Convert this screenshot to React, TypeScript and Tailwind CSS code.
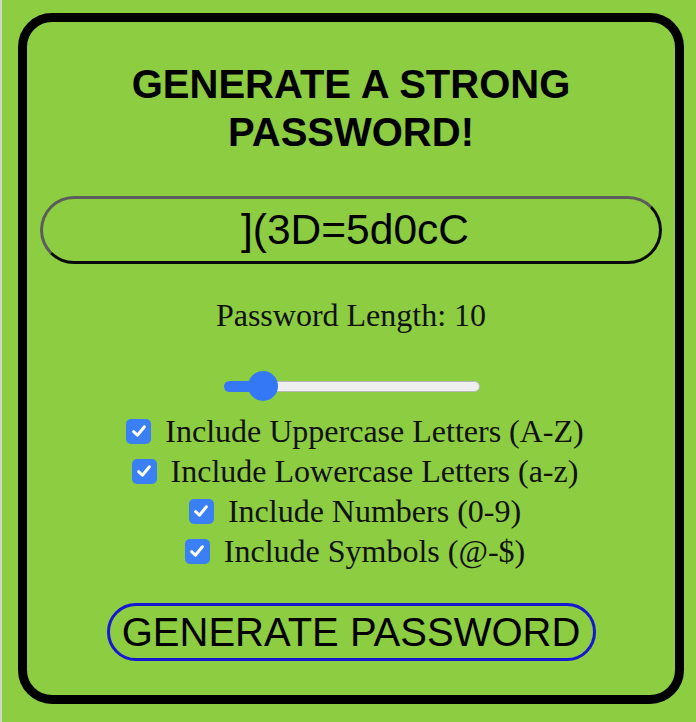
import React from "react";

const labels = [
  "Include Uppercase Letters (A-Z)",
  "Include Lowercase Letters (a-z)",
  "Include Numbers (0-9)",
  "Include Symbols (@-$)",
];

function Check() {
  return (
    <span className="ml-[8px] mr-[6px] flex h-[25px] w-[25px] shrink-0 items-center justify-center rounded-[5px] bg-[#3b7ff5]">
      <svg width="18" height="18" viewBox="0 0 16 16" fill="none">
        <path d="M3.2 8.6 L6.6 11.8 L12.8 4.2" stroke="white" strokeWidth="2.6" strokeLinecap="round" strokeLinejoin="round" />
      </svg>
    </span>
  );
}

export default function App() {
  return (
    <div className="h-[722px] w-[696px] bg-[#8ccd41] pl-[18px] pt-[13px] border-l-[2px] border-[#cfd6c8]">
      <div className="ml-[-2px] flex h-[691px] w-[666px] flex-col items-center rounded-[34px] border-[9px] border-black">
        <h1 className="mt-[38px] text-center text-[40px] font-bold leading-[48px] text-black [font-family:'Liberation_Sans',Arial,sans-serif]">
          GENERATE A STRONG
          <br />
          PASSWORD!
        </h1>
        <div className="mt-[40px] flex h-[68px] w-[622px] items-center justify-center rounded-full border-[3px] border-t-[#5c5c5c] border-l-[#5c5c5c] border-b-[#0a0a0a] border-r-[#0a0a0a] pl-[8px] text-[42.5px] text-black [font-family:'Liberation_Sans',Arial,sans-serif]">
          ](3D=5d0cC
        </div>
        <div className="mt-[33px] text-[32px] leading-[36px] text-[#111] [font-family:'Liberation_Serif','Times_New_Roman',serif]">
          Password Length: 10
        </div>
        <div className="relative ml-[2px] mt-[38px] flex h-[30px] w-[256px] items-center">
          <div className="h-[11px] w-full rounded-full border border-[#b8b8b8] bg-[#efefef]" />
          <div className="absolute left-0 top-[9.5px] h-[11px] w-[40px] rounded-l-full bg-[#3478f6]" />
          <div className="absolute left-[24px] top-0 h-[30px] w-[30px] rounded-full bg-[#3478f6]" />
        </div>
        <div className="mt-[10px] flex flex-col items-center">
          {labels.map((l) => (
            <div key={l} className="flex h-[40px] items-center">
              <Check />
              <span className="pl-[8px] text-[32px] leading-[40px] text-[#111] [font-family:'Liberation_Serif','Times_New_Roman',serif]">
                {l}
              </span>
            </div>
          ))}
        </div>
        <button className="mt-[32px] flex h-[58px] w-[489px] items-center justify-center rounded-full border-[3px] border-[#1717d6] bg-transparent text-[40px] text-black [font-family:'Liberation_Sans',Arial,sans-serif]">
          GENERATE PASSWORD
        </button>
      </div>
    </div>
  );
}
